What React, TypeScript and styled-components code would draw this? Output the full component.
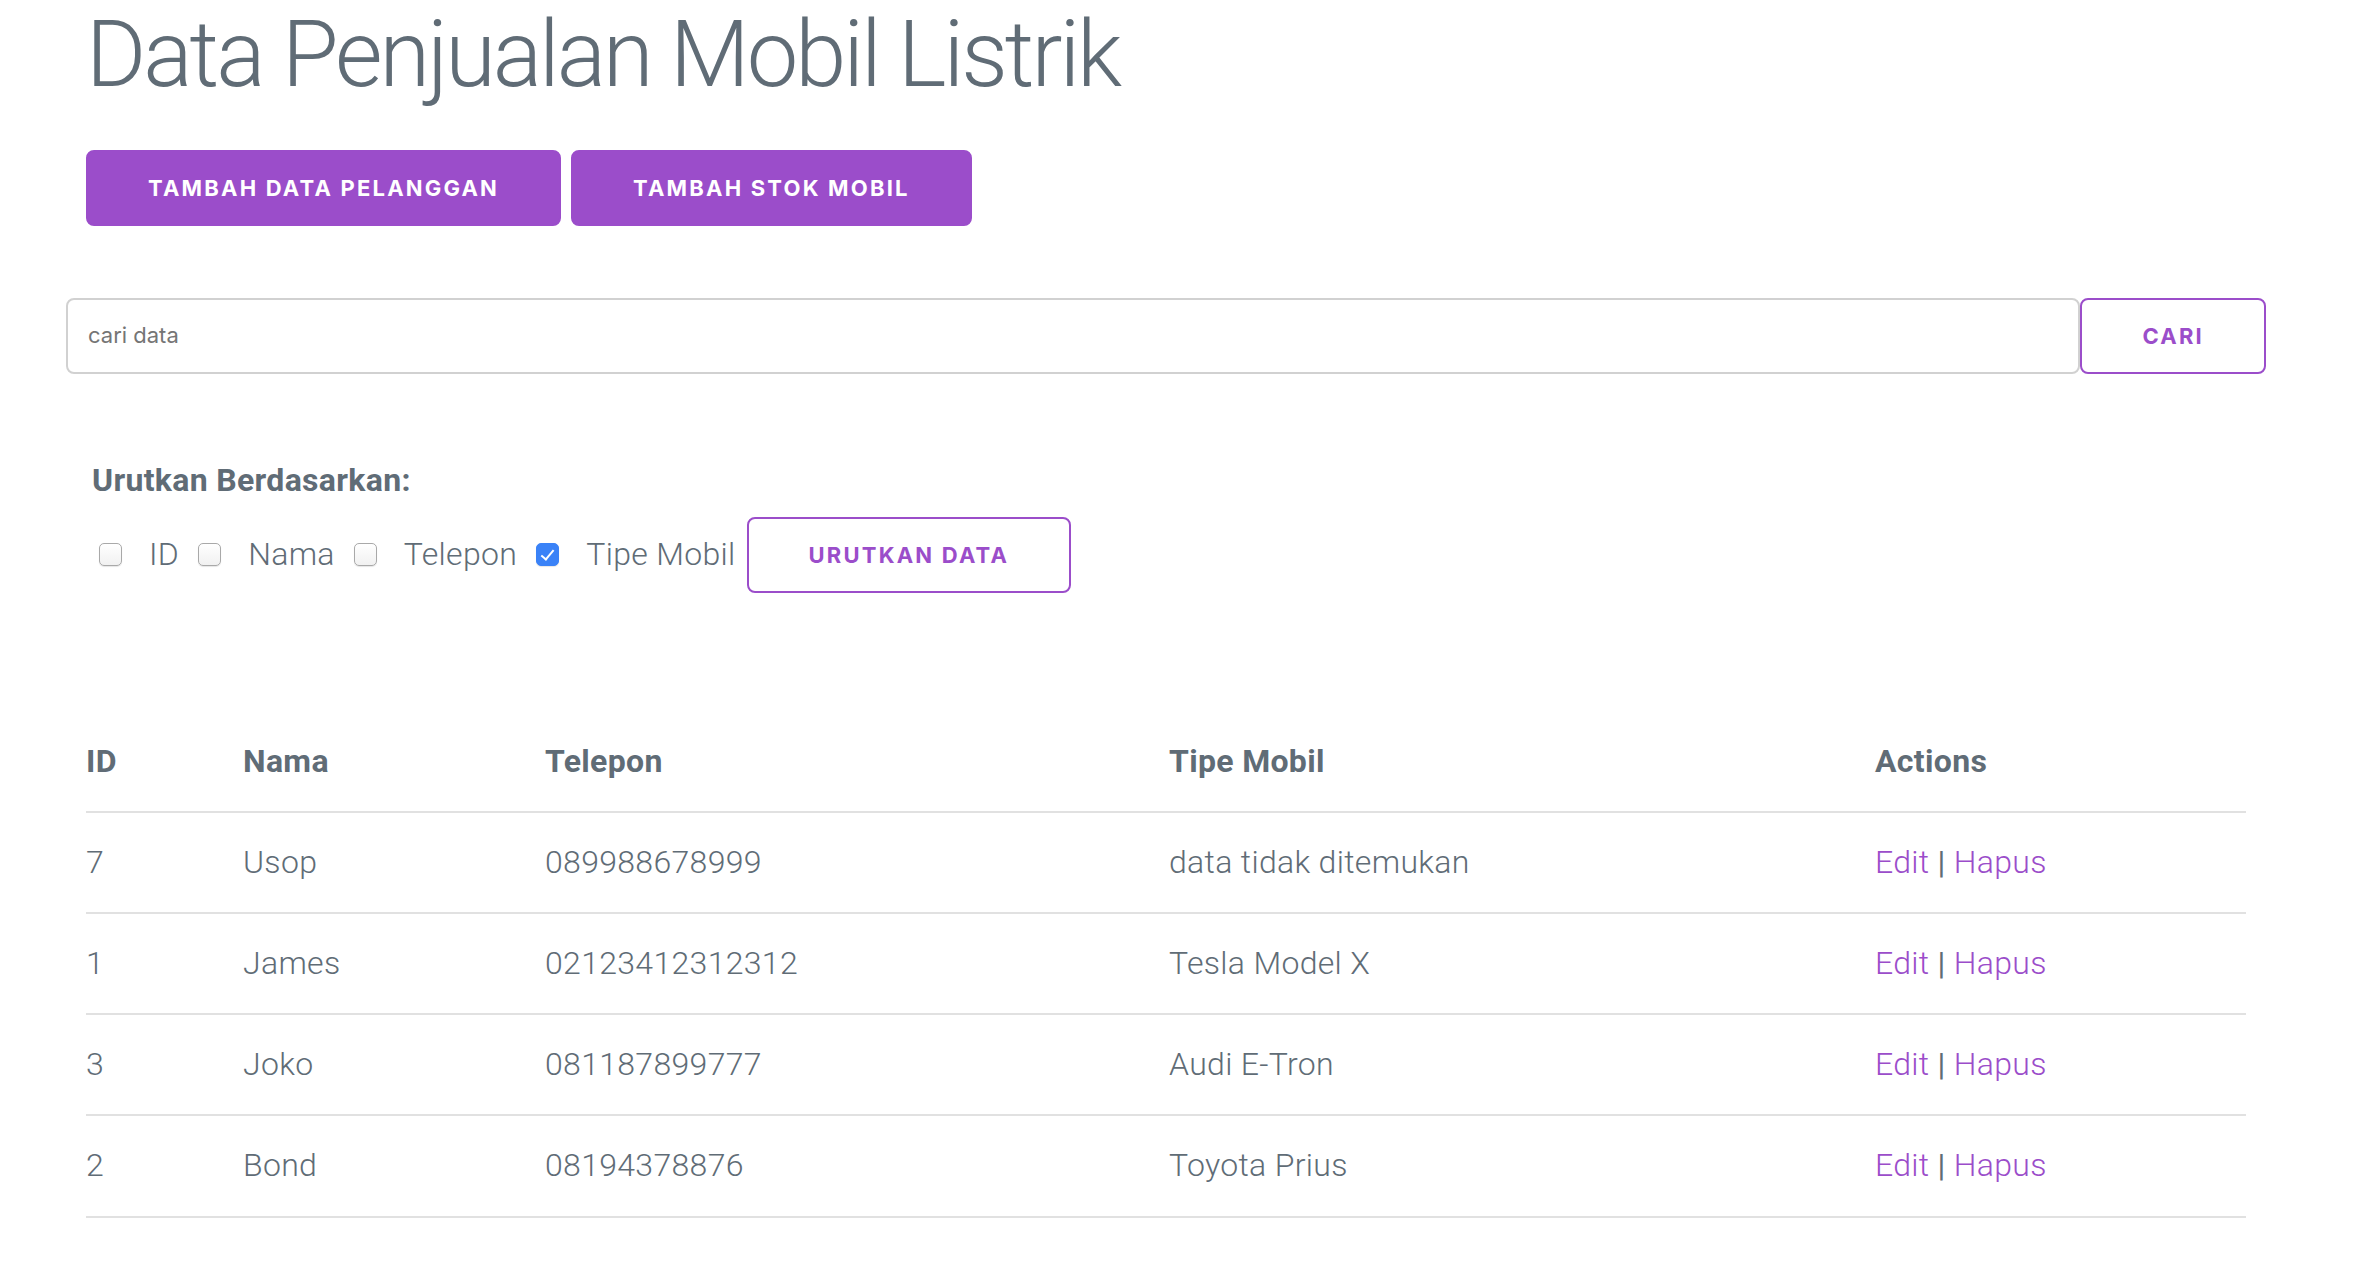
import styled, { createGlobalStyle } from 'styled-components';

const GlobalStyle = createGlobalStyle`
  html, body {
    margin: 0;
    padding: 0;
    background: #fff;
  }
  body {
    font-family: Roboto, 'Helvetica Neue', 'Liberation Sans', Arial, sans-serif;
    font-size: 32px;
    font-weight: 300;
    line-height: 1.6;
    letter-spacing: 0.32px;
    color: #606c76;
  }
`;

const purple = '#9b4dca';

const Container = styled.main`
  width: 2160px;
  margin-left: 86px;
`;

const Title = styled.h1`
  margin: 0 0 40px;
  font-size: 92px;
  font-weight: 300;
  line-height: 1.2;
  letter-spacing: -3px;
`;

const ButtonRow = styled.div`
  display: flex;
  gap: 10px;
`;

const Button = styled.button<{ $outline?: boolean }>`
  height: 76px;
  padding: 0 60px;
  border: 2px solid ${purple};
  border-radius: 8px;
  background: ${(p) => (p.$outline ? 'transparent' : purple)};
  color: ${(p) => (p.$outline ? purple : '#fff')};
  font-family: Inter, 'Liberation Sans', sans-serif;
  font-size: 22px;
  font-weight: 700;
  letter-spacing: 2.2px;
  text-transform: uppercase;
  white-space: nowrap;
  cursor: pointer;
`;

const SearchRow = styled.form`
  display: flex;
  margin: 72px 0 0 -20px;
  width: calc(100% + 40px);
`;

const SearchInput = styled.input`
  flex: 1;
  height: 76px;
  box-sizing: border-box;
  padding: 12px 20px 14px;
  border: 2px solid #d1d1d1;
  border-radius: 8px;
  font-family: Inter, 'Liberation Sans', sans-serif;
  font-size: 22px;
  color: #606c76;
  outline: none;

  &::placeholder {
    color: #757575;
  }
`;

const SortSection = styled.section`
  margin-top: 81px;
  padding-left: 6px;
`;

const SortLabel = styled.label`
  display: block;
  font-weight: 700;
  margin-bottom: 10px;
`;

const SortRow = styled.div`
  display: flex;
  align-items: center;
  height: 76px;
`;

const Option = styled.label`
  display: inline-flex;
  align-items: center;
  margin-right: 12px;
`;

const Check = styled.input.attrs({ type: 'checkbox' })`
  appearance: none;
  position: relative;
  width: 23px;
  height: 23px;
  margin: 0 27px 0 7px;
  box-sizing: border-box;
  border: 1.5px solid #a9a9a9;
  border-radius: 5px;
  background: linear-gradient(#fff, #f1f1f1);
  box-shadow: 0 1px 1px rgba(0, 0, 0, 0.1);

  &:checked {
    background: #3a82f7;
    border-color: #3a82f7;
  }

  &:checked::after {
    content: '';
    position: absolute;
    left: 6.5px;
    top: 2.5px;
    width: 5px;
    height: 11px;
    border: solid #fff;
    border-width: 0 2.5px 2.5px 0;
    transform: rotate(40deg);
  }
`;

const SortButton = styled(Button)`
  margin-left: -1px;
`;

const Table = styled.table`
  width: 100%;
  margin-top: 119px;
  border-collapse: collapse;
  table-layout: fixed;
`;

const Cell = styled.td`
  padding: 24px 30px;
  border-bottom: 2px solid #e1e1e1;
  text-align: left;
  white-space: nowrap;

  &:first-child {
    padding-left: 0;
  }
  &:last-child {
    padding-right: 0;
  }
`;

const HeadCell = styled(Cell).attrs({ as: 'th' })`
  font-weight: 700;
`;

const ActionLink = styled.a`
  color: ${purple};
  text-decoration: none;
  cursor: pointer;
`;

const Divider = styled.span`
  color: #606c76;
  font-weight: 400;
`;

type Pelanggan = { id: number; nama: string; telepon: string; tipe: string };

const rows: Pelanggan[] = [
  { id: 7, nama: 'Usop', telepon: '089988678999', tipe: 'data tidak ditemukan' },
  { id: 1, nama: 'James', telepon: '02123412312312', tipe: 'Tesla Model X' },
  { id: 3, nama: 'Joko', telepon: '081187899777', tipe: 'Audi E-Tron' },
  { id: 2, nama: 'Bond', telepon: '08194378876', tipe: 'Toyota Prius' },
];

const sortOptions = [
  { label: 'ID', checked: false },
  { label: 'Nama', checked: false },
  { label: 'Telepon', checked: false },
  { label: 'Tipe Mobil', checked: true },
];

const columnWidths = [127, 302, 624, 706, 401];

export default function App() {
  return (
    <>
      <GlobalStyle />
      <Container>
        <Title>Data Penjualan Mobil Listrik</Title>
        <ButtonRow>
          <Button>Tambah Data Pelanggan</Button>
          <Button>Tambah Stok Mobil</Button>
        </ButtonRow>

        <SearchRow onSubmit={(e) => e.preventDefault()}>
          <SearchInput type="text" placeholder="cari data" />
          <Button $outline type="submit">
            Cari
          </Button>
        </SearchRow>

        <SortSection>
          <SortLabel>Urutkan Berdasarkan:</SortLabel>
          <SortRow>
            {sortOptions.map((opt) => (
              <Option key={opt.label}>
                <Check defaultChecked={opt.checked} />
                {opt.label}
              </Option>
            ))}
            <SortButton $outline>Urutkan Data</SortButton>
          </SortRow>
        </SortSection>

        <Table>
          <colgroup>
            {columnWidths.map((w, i) => (
              <col key={i} style={{ width: w }} />
            ))}
          </colgroup>
          <thead>
            <tr>
              <HeadCell>ID</HeadCell>
              <HeadCell>Nama</HeadCell>
              <HeadCell>Telepon</HeadCell>
              <HeadCell>Tipe Mobil</HeadCell>
              <HeadCell>Actions</HeadCell>
            </tr>
          </thead>
          <tbody>
            {rows.map((row) => (
              <tr key={row.id}>
                <Cell>{row.id}</Cell>
                <Cell>{row.nama}</Cell>
                <Cell>{row.telepon}</Cell>
                <Cell>{row.tipe}</Cell>
                <Cell>
                  <ActionLink>Edit</ActionLink> <Divider>|</Divider>{' '}
                  <ActionLink>Hapus</ActionLink>
                </Cell>
              </tr>
            ))}
          </tbody>
        </Table>
      </Container>
    </>
  );
}
